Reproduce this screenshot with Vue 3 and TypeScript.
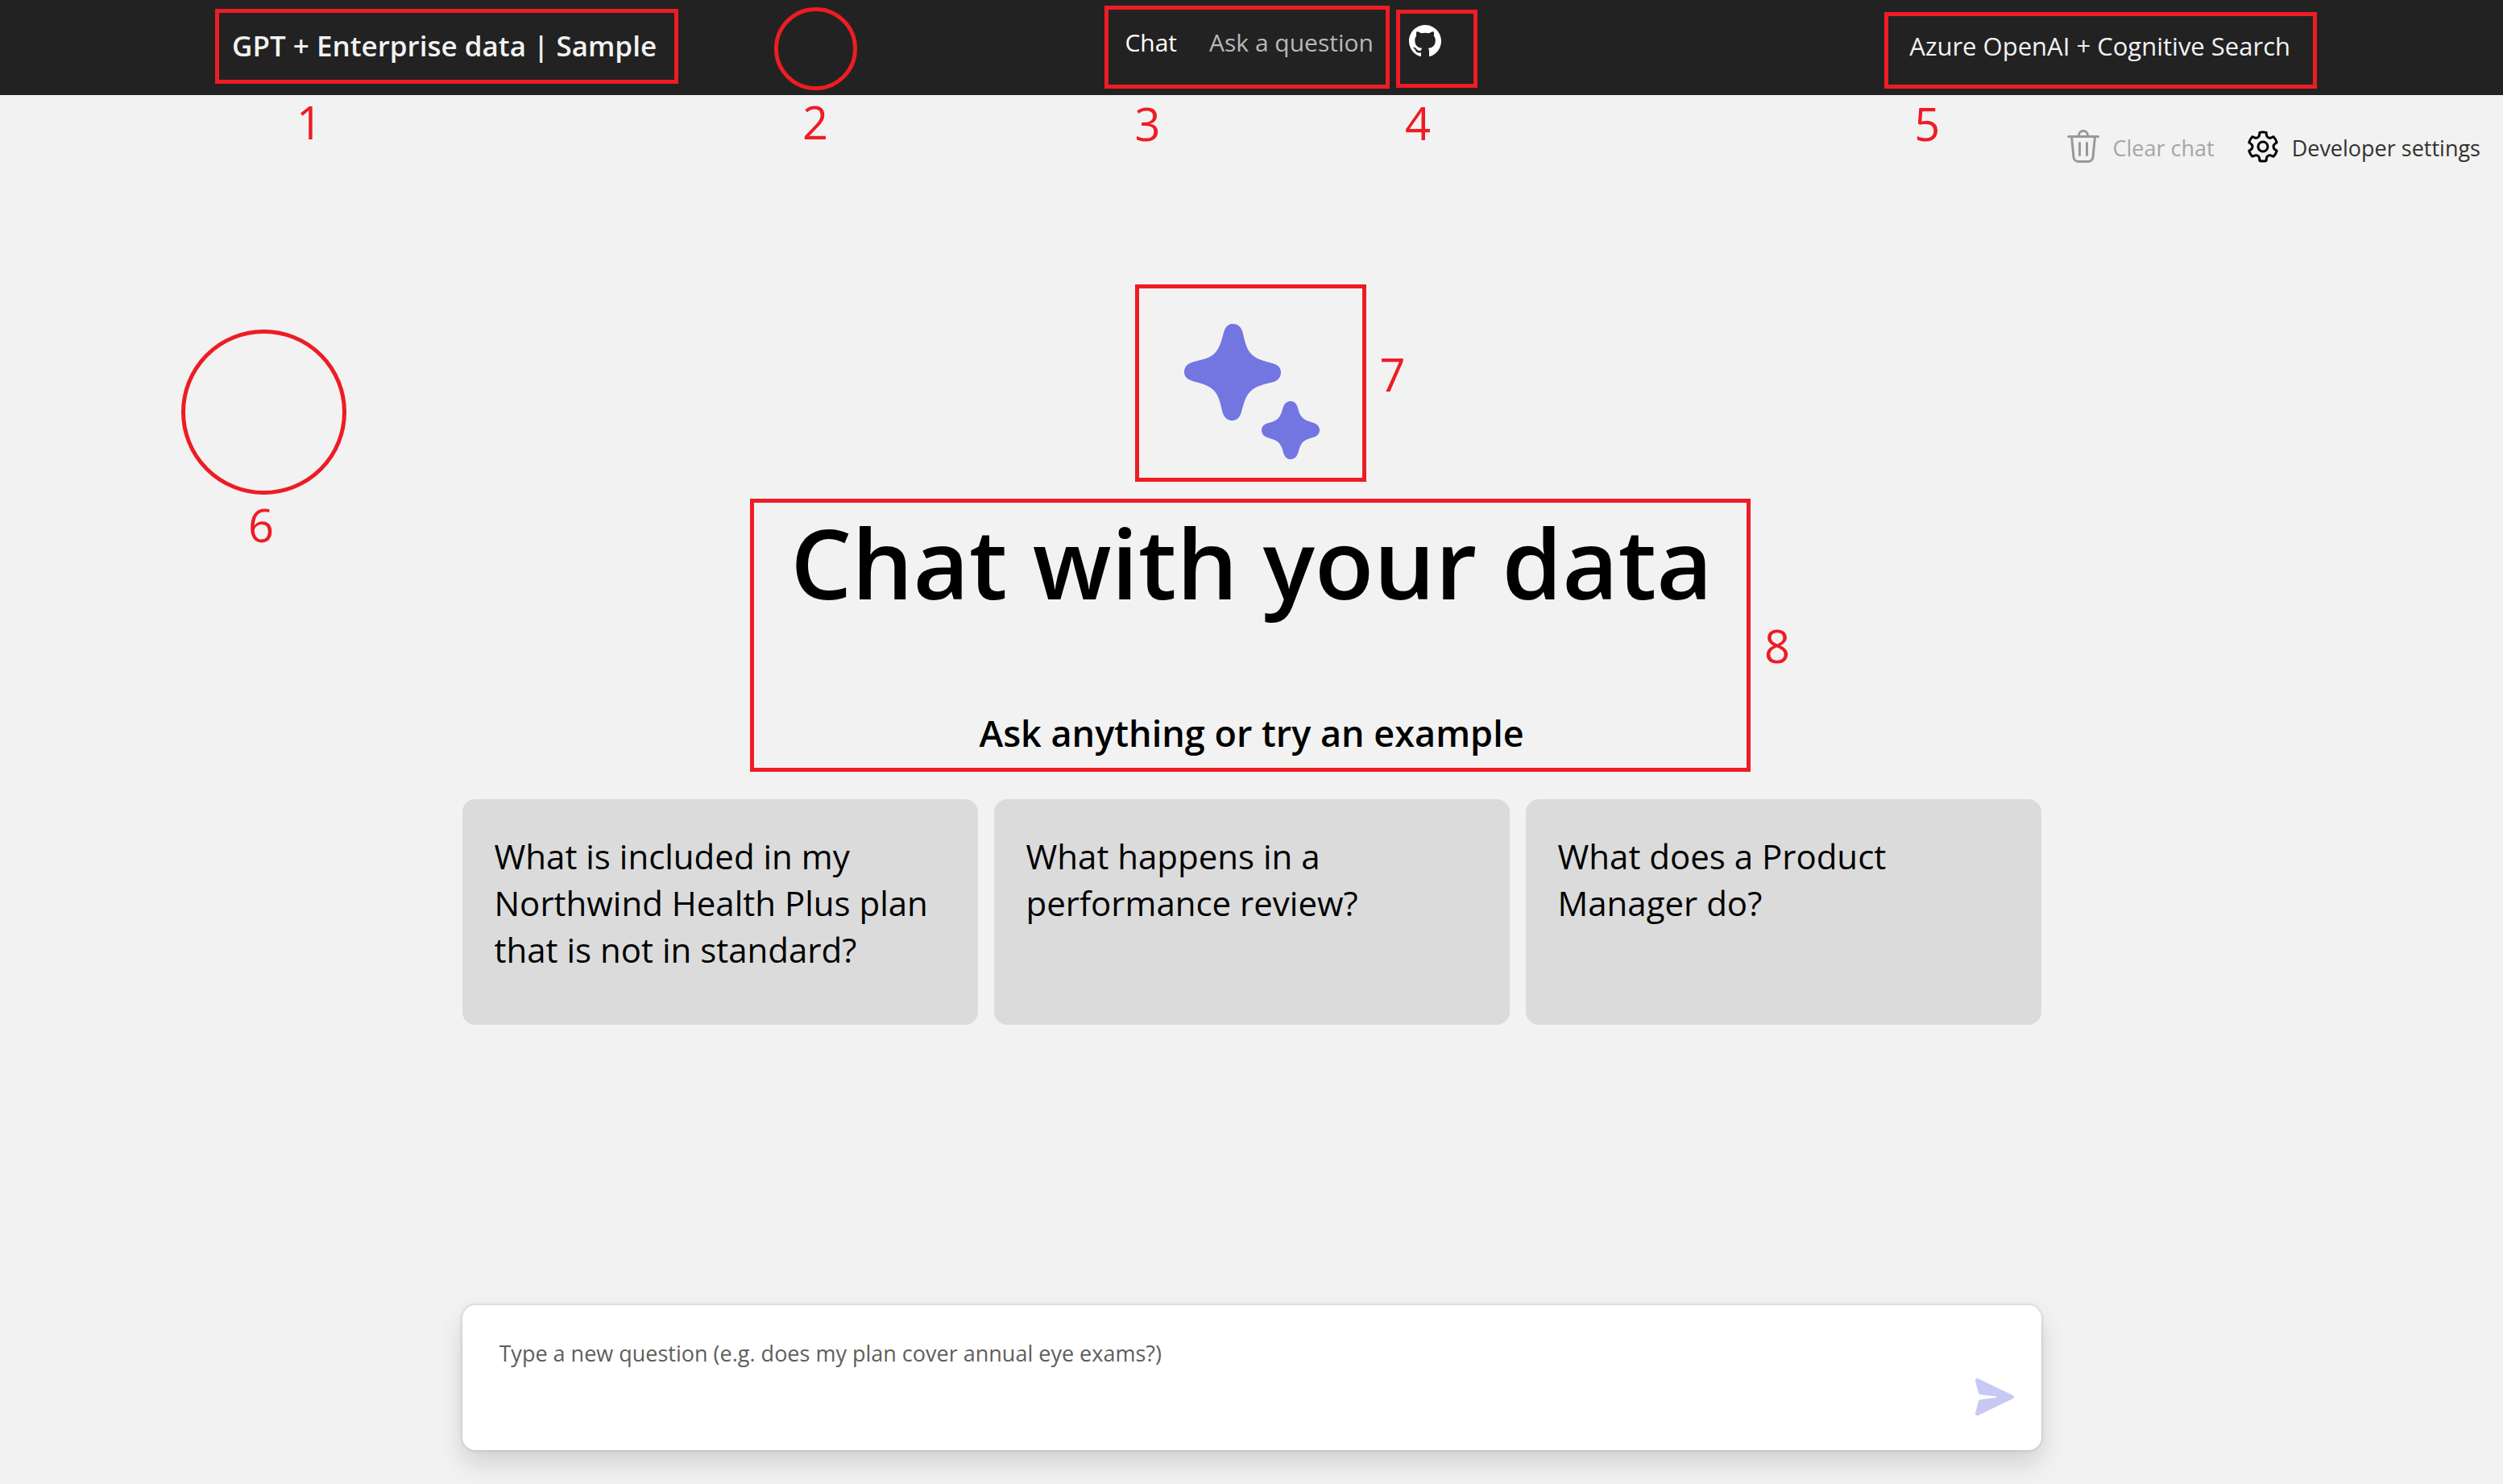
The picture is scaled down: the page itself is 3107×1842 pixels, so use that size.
<script setup lang="ts">
import { ref } from 'vue'

const examples: string[] = [
  'What is included in my Northwind Health Plus plan that is not in standard?',
  'What happens in a performance review?',
  'What does a Product Manager do?'
]
const question = ref<string>('')
const quarterTurns: number[] = [0, 90, 180, 270]
</script>

<template>
  <div class="layout">
    <header class="header">
      <a href="#" class="title">
        GPT + Enterprise data | Sample
        <span class="mark mark-title"><span class="num">1</span></span>
      </a>
      <span class="mark mark-round mark-header"><span class="num">2</span></span>
      <nav class="nav">
        <div class="links">
          <a href="#" class="link active">Chat</a>
          <a href="#" class="link">Ask a question</a>
          <span class="mark mark-links"><span class="num">3</span></span>
        </div>
        <a href="#" class="github" aria-label="Github repository link">
          <svg viewBox="0 0 16 16" width="40" height="40" fill="#fff">
            <path d="M8 0C3.58 0 0 3.58 0 8c0 3.54 2.29 6.53 5.47 7.59.4.07.55-.17.55-.38 0-.19-.01-.82-.01-1.49-2.01.37-2.53-.49-2.69-.94-.09-.23-.48-.94-.82-1.13-.28-.15-.68-.52-.01-.53.63-.01 1.08.58 1.23.82.72 1.21 1.87.87 2.33.66.07-.52.28-.87.51-1.07-1.78-.2-3.64-.89-3.64-3.95 0-.87.31-1.59.82-2.15-.08-.2-.36-1.02.08-2.12 0 0 .67-.21 2.2.82.64-.18 1.32-.27 2-.27s1.36.09 2 .27c1.53-1.04 2.2-.82 2.2-.82.44 1.1.16 1.92.08 2.12.51.56.82 1.27.82 2.15 0 3.07-1.87 3.75-3.65 3.95.29.25.54.73.54 1.48 0 1.07-.01 1.93-.01 2.2 0 .21.15.46.55.38A8.01 8.01 0 0 0 16 8c0-4.42-3.58-8-8-8z" />
          </svg>
          <span class="mark mark-github"><span class="num">4</span></span>
        </a>
      </nav>
      <h4 class="tagline">
        Azure OpenAI + Cognitive Search
        <span class="mark mark-tagline"><span class="num">5</span></span>
      </h4>
    </header>

    <main class="main">
      <span class="mark mark-round mark-canvas"><span class="num">6</span></span>
      <div class="commands">
        <button type="button" class="command" disabled>
          <svg viewBox="0 0 24 24" width="48" height="48" fill="#999">
            <path d="M10 5h4a2 2 0 1 0-4 0ZM8.5 5a3.5 3.5 0 1 1 7 0h5.75a.75.75 0 0 1 0 1.5h-1.32l-1.17 12.11A3.75 3.75 0 0 1 15.03 22H8.97a3.75 3.75 0 0 1-3.73-3.39L4.07 6.5H2.75a.75.75 0 0 1 0-1.5H8.5Zm2 4.75a.75.75 0 0 0-1.5 0v7.5a.75.75 0 0 0 1.5 0v-7.5ZM14.25 9c.41 0 .75.34.75.75v7.5a.75.75 0 0 1-1.5 0v-7.5c0-.41.34-.75.75-.75Zm-7.52 9.47a2.25 2.25 0 0 0 2.24 2.03h6.06c1.15 0 2.12-.88 2.24-2.03L18.42 6.5H5.58l1.15 11.97Z" />
          </svg>
          <span class="command-text">Clear chat</span>
        </button>
        <button type="button" class="command">
          <svg viewBox="0 0 24 24" width="48" height="48" fill="#000">
            <path d="M12.01 2.25c.74 0 1.47.1 2.18.25.32.07.55.33.59.65l.17 1.53a1.38 1.38 0 0 0 1.92 1.11l1.4-.61c.3-.13.64-.06.85.17a9.79 9.79 0 0 1 2.2 3.8c.1.3 0 .63-.26.82l-1.24.92a1.38 1.38 0 0 0 0 2.22l1.24.92c.26.19.36.52.27.82a9.8 9.8 0 0 1-2.2 3.8.75.75 0 0 1-.85.17l-1.4-.62a1.38 1.38 0 0 0-1.93 1.12l-.17 1.52a.75.75 0 0 1-.58.65 9.52 9.52 0 0 1-4.4 0 .75.75 0 0 1-.57-.65l-.17-1.52a1.38 1.38 0 0 0-1.93-1.11l-1.4.6a.75.75 0 0 1-.85-.16 9.79 9.79 0 0 1-2.2-3.81c-.1-.3 0-.63.26-.82l1.24-.92a1.38 1.38 0 0 0 0-2.22l-1.24-.92a.75.75 0 0 1-.28-.82 9.8 9.8 0 0 1 2.2-3.8c.23-.23.57-.3.86-.17l1.4.62c.4.17.86.15 1.25-.08.38-.22.63-.6.68-1.04l.17-1.53a.75.75 0 0 1 .58-.65c.72-.16 1.45-.24 2.2-.25Zm0 1.5c-.45 0-.9.04-1.35.12l-.11.97a2.89 2.89 0 0 1-4.03 2.33l-.9-.4A8.3 8.3 0 0 0 4.28 9.1l.8.59a2.88 2.88 0 0 1 0 4.64l-.8.59a8.3 8.3 0 0 0 1.35 2.32l.9-.4a2.88 2.88 0 0 1 4.02 2.33l.11.99c.9.15 1.8.15 2.7 0l.1-.99a2.88 2.88 0 0 1 4.02-2.32l.9.4a8.3 8.3 0 0 0 1.36-2.33l-.8-.59a2.88 2.88 0 0 1 0-4.64l.8-.59a8.3 8.3 0 0 0-1.35-2.32l-.9.4a2.88 2.88 0 0 1-4.02-2.32l-.11-.98c-.45-.08-.9-.12-1.34-.12ZM12 8.25a3.75 3.75 0 1 1 0 7.5 3.75 3.75 0 0 1 0-7.5Zm0 1.5a2.25 2.25 0 1 0 0 4.5 2.25 2.25 0 0 0 0-4.5Z" />
          </svg>
          <span class="command-text">Developer settings</span>
        </button>
      </div>

      <section class="hero">
        <div class="logo">
          <svg viewBox="0 0 504 504" width="168" height="168" fill="#7376e1" aria-hidden="true">
            <g transform="translate(180 180)">
              <path
                v-for="turn in quarterTurns"
                :key="turn"
                :transform="`rotate(${turn})`"
                d="M-1 1V-180H0C18-180 30-171 37-151C42-132 44-120 50-102C60-72 76-58 102-47C120-40 134-37 151-32C171-26 180-14 180 0V1Z"
              />
            </g>
            <g transform="translate(396 396)">
              <path
                v-for="turn in quarterTurns"
                :key="turn"
                :transform="`rotate(${turn})`"
                d="M-1 1V-108H0C12-108 21-101 26-86C30-74 30-70 34-62C39-50 46-42 60-36C70-32 76-31 87-27C102-21 108-12 108 0V1Z"
              />
            </g>
          </svg>
          <span class="mark mark-logo"><span class="num num-side">7</span></span>
        </div>
        <div class="headings">
          <h1 class="headline">Chat with your data</h1>
          <h2 class="subhead">Ask anything or try an example</h2>
          <span class="mark mark-headings"><span class="num num-side">8</span></span>
        </div>
        <ul class="examples">
          <li v-for="text in examples" :key="text">
            <button type="button" class="example" @click="question = text">{{ text }}</button>
          </li>
        </ul>
      </section>

      <form class="ask" @submit.prevent>
        <textarea
          v-model="question"
          class="field"
          rows="2"
          aria-label="Question"
          placeholder="Type a new question (e.g. does my plan cover annual eye exams?)"
        ></textarea>
        <button type="submit" class="send" aria-label="Ask question button">
          <svg viewBox="0 0 144 138" width="48" height="46" fill="#c7c8f4">
            <path d="M11 1L140 63Q148 69 140 75L11 137Q0 141 0 130L12 84Q14 80 18 79L77 71Q81 69 77 67L18 60Q14 59 12 55L0 10Q0-3 11 1Z" />
          </svg>
        </button>
      </form>
    </main>
  </div>
</template>

<style>
html,
body {
  margin: 0;
  background: #f2f2f2;
}
</style>

<style scoped>
.layout {
  display: flex;
  flex-direction: column;
  min-height: 100vh;
  font-family: 'Open Sans', 'Noto Sans', sans-serif;
  color: #000;
}
.header {
  position: relative;
  display: flex;
  align-items: center;
  justify-content: space-between;
  box-sizing: border-box;
  height: 118px;
  padding: 0 264px 5px 288px;
  background: #222;
  color: #f2f2f2;
  white-space: nowrap;
}
.title {
  position: relative;
  font-size: 35px;
  font-weight: 600;
  line-height: 48px;
  color: #f2f2f2;
  text-decoration: none;
}
.nav {
  display: flex;
  align-items: center;
  gap: 44px;
  padding-bottom: 12px;
}
.links {
  position: relative;
  display: flex;
  gap: 40px;
  padding-top: 4px;
}
.link {
  font-size: 30px;
  line-height: 40px;
  color: #b8b8b8;
  text-decoration: none;
}
.link.active {
  color: #fff;
}
.github {
  position: relative;
  display: block;
  height: 40px;
}
.github svg {
  display: block;
}
.tagline {
  position: relative;
  margin: 0;
  font-size: 31px;
  font-weight: 400;
  line-height: 48px;
}
.main {
  position: relative;
  flex: 1;
  display: flex;
  flex-direction: column;
  align-items: center;
}
.commands {
  align-self: flex-end;
  display: flex;
  gap: 36px;
  height: 48px;
  padding: 40px 28px 0 0;
}
.command {
  display: flex;
  align-items: center;
  gap: 12px;
  padding: 0;
  border: 0;
  background: none;
  font-family: inherit;
  font-size: 27px;
  line-height: 40px;
  color: #323130;
}
.command:disabled {
  color: #a6a6a6;
}
.command-text {
  padding-top: 4px;
}
.hero {
  flex: 1;
  display: flex;
  flex-direction: column;
  align-items: center;
  width: 100%;
  max-width: 1960px;
  padding-top: 196px;
}
.logo {
  position: relative;
  height: 168px;
}
.logo svg {
  display: block;
}
.headings {
  position: relative;
  padding-top: 44px;
  text-align: center;
  white-space: nowrap;
}
.headline {
  margin: 0;
  font-size: 120px;
  font-weight: 600;
  line-height: 168px;
}
.subhead {
  margin: 96px 0 0;
  font-size: 45px;
  font-weight: 600;
  line-height: 64px;
}
.examples {
  display: grid;
  grid-template-columns: repeat(3, 1fr);
  gap: 20px;
  width: 100%;
  margin: 50px 0 0;
  padding: 0;
  list-style: none;
}
.example {
  display: flex;
  align-items: flex-start;
  width: 100%;
  height: 280px;
  padding: 42px 40px;
  border: 0;
  border-radius: 16px;
  background: #dbdbdb;
  font-family: inherit;
  font-size: 42px;
  line-height: 58px;
  text-align: left;
  color: #000;
}
.ask {
  display: flex;
  align-items: flex-end;
  box-sizing: border-box;
  width: 100%;
  max-width: 1960px;
  height: 180px;
  margin: 0 0 42px;
  padding: 40px 34px 43px 46px;
  border-radius: 16px;
  background: #fff;
  box-shadow: 0 16px 32px rgba(0, 0, 0, 0.14), 0 0 4px rgba(0, 0, 0, 0.2);
}
.field {
  flex: 1;
  align-self: stretch;
  padding: 0;
  border: 0;
  outline: 0;
  resize: none;
  background: none;
  font-family: inherit;
  font-size: 27px;
  line-height: 40px;
  color: #323130;
}
.field::placeholder {
  color: #605e5c;
  opacity: 1;
}
.send {
  padding: 0;
  border: 0;
  background: none;
}
.send svg {
  display: block;
}

/* Numbered callouts drawn over the page */
.mark {
  position: absolute;
  box-sizing: border-box;
  border: 5px solid #ee1c24;
  pointer-events: none;
}
.mark-round {
  border-radius: 50%;
}
.num {
  position: absolute;
  top: 100%;
  left: 32px;
  margin-top: 10px;
  font-size: 56px;
  font-weight: 400;
  line-height: 76px;
  color: #ee1c24;
}
.mark-title {
  top: -22px;
  right: -27px;
  left: -21px;
  height: 93px;
}
.mark-header {
  top: 9px;
  left: 961px;
  width: 103px;
  height: 103px;
}
.mark-links {
  top: -22px;
  right: -20px;
  left: -25px;
  height: 103px;
}
.mark-github {
  top: -19px;
  left: -16px;
  width: 101px;
  height: 97px;
}
.mark-tagline {
  top: -18px;
  right: -33px;
  left: -31px;
  height: 95px;
}
.mark-canvas {
  top: 291px;
  left: 225px;
  width: 205px;
  height: 205px;
}
.mark-logo {
  top: -49px;
  left: -61px;
  width: 287px;
  height: 245px;
}
.mark-headings {
  top: 49px;
  right: -47px;
  left: -50px;
  bottom: -16px;
}
.mark-title .num {
  left: 96px;
  margin-top: 14px;
}
.mark-header .num {
  left: 30px;
  margin-top: 6px;
}
.mark-github .num {
  left: 6px;
}
.mark-canvas .num {
  left: 78px;
  margin-top: 4px;
}
.mark .num-side {
  top: 50%;
  left: 100%;
  margin: -50px 0 0 22px;
}
.mark-headings .num-side {
  margin-top: -26px;
}
</style>
